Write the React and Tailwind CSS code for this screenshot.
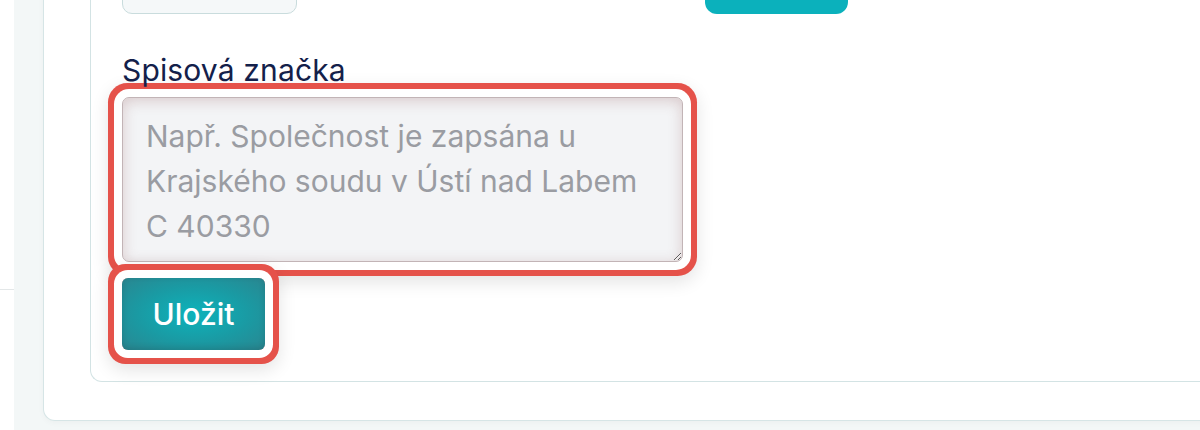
export default function App() {
  return (
    <div className="flex h-[430px] w-[1200px] overflow-hidden bg-[#f3f7f7] font-['Inter',sans-serif]">
      {/* Thin sidebar edge */}
      <div className="w-[14px] shrink-0 bg-white">
        <div className="h-[290px] border-b border-[#e3e7e8]" />
      </div>

      {/* Main area */}
      <div className="flex-1 pl-[29px]">
        {/* Outer card */}
        <div className="-mt-[40px] -mr-[40px] rounded-b-[12px] border border-t-0 border-[#d6e5e6] bg-white pb-[38px] pl-[46px] shadow-[0_2px_6px_rgba(0,0,0,0.03)]">
          {/* Inner card */}
          <div className="rounded-bl-[12px] border border-t-0 border-r-0 border-[#d3e3e4] bg-white pb-[31px] pl-[31px]">
            {/* Previous row, mostly scrolled off */}
            <div className="flex items-end pt-[4px]">
              <div className="h-[50px] w-[175px] rounded-[10px] border border-[#c9dcdd] bg-[#f5f8f9]" />
              <div className="ml-[408px] h-[50px] w-[143px] rounded-b-[12px] bg-[#0bb1bc]" />
            </div>

            {/* Spisová značka */}
            <label className="mt-[38px] block text-[30px] leading-[36px] tracking-[0.005em] text-[#13204a]">
              Spisová značka
            </label>
            <textarea
              rows={3}
              placeholder={'Např. Společnost je zapsána u\nKrajského soudu v Ústí nad Labem\nC 40330'}
              className="mt-[9px] block h-[165px] w-[561px] rounded-[7px] border border-[#c2b4b6] bg-[#f3f4f6] px-[23px] pt-[16px] pb-[10px] text-[30px] leading-[45px] text-[#13204a] outline-none placeholder:text-[#9a9ca2] shadow-[inset_0_3px_14px_rgba(140,70,70,0.24),0_0_0_8px_#ffffff,0_0_0_14px_#e5524a,0_6px_18px_14px_rgba(0,0,0,0.11)]"
            />
            <button className="relative mt-[16px] block h-[72px] w-[143px] rounded-[6px] bg-[radial-gradient(ellipse_at_center,#0db3bb_0%,#1a9aa3_55%,#2a8690_100%)] text-[30px] font-medium text-white shadow-[inset_0_-2px_6px_rgba(0,0,0,0.12),0_0_0_8px_#ffffff,0_0_0_14px_#e5524a,0_6px_18px_14px_rgba(0,0,0,0.11)]">
              Uložit
            </button>
          </div>
        </div>
      </div>
    </div>
  )
}
